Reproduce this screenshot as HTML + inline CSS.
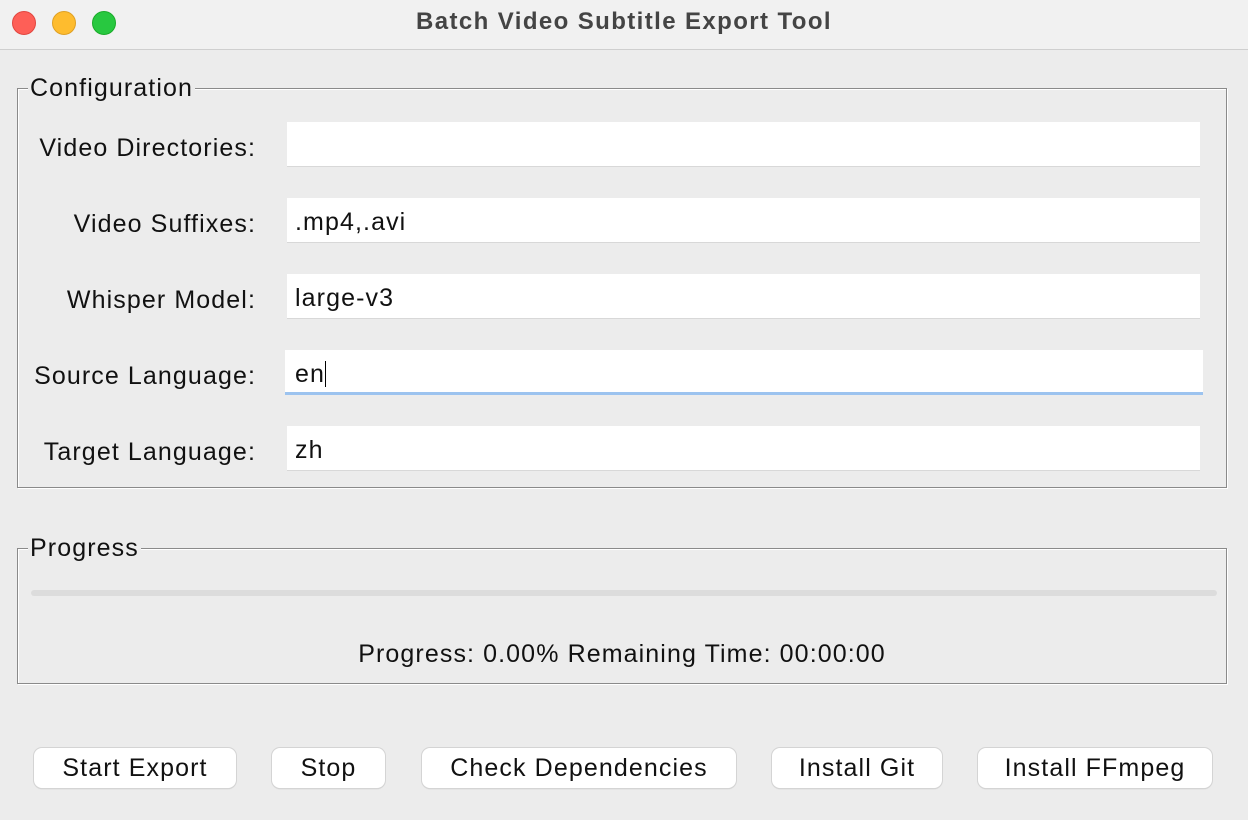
<!DOCTYPE html>
<html><head><style>
body{margin:0;width:1248px;height:820px;background:#ececec;font-family:"Liberation Sans",Arial,sans-serif;position:relative;overflow:hidden;color:#111}
.tb{position:absolute;left:0;top:0;width:1248px;height:50px;background:#f1f1f1;border-bottom:1px solid #cfcfcf;box-sizing:border-box}
.dot{position:absolute;top:11px;width:24px;height:24px;border-radius:50%}
.title{position:absolute;top:8px;left:0;width:1248px;text-align:center;font-weight:bold;font-size:24px;color:#444;letter-spacing:1.4px}
.frame{position:absolute;left:17px;width:1210px;box-sizing:border-box;border:1px solid #8a8a8a;box-shadow:inset 1px 1px 0 #fff,1px 1px 0 #fff}
.t{font-size:25px;letter-spacing:1.1px}
.lg{position:absolute;left:10px;top:-15px;background:#ececec;padding:0 2px;font-size:25px;letter-spacing:1.1px}
.lbl{position:absolute;right:992px;font-size:25px;letter-spacing:1.1px;text-align:right}
.ent{position:absolute;left:287px;width:913px;height:45px;background:#fff;box-sizing:border-box;border-bottom:1px solid #d8d8d8;font-size:25px;letter-spacing:1.1px;line-height:48px;padding-left:8px}
.btn{position:absolute;top:748px;height:40px;background:#fff;border-radius:8px;box-shadow:0 0 0 1px #d4d4d4,0 1px 1px #bbb;font-size:25px;letter-spacing:1.1px;text-align:center;line-height:40px}
</style></head><body>
<div class="tb">
<div class="dot" style="left:12px;background:#fe5f57;border:1px solid #e1463f;box-sizing:border-box"></div>
<div class="dot" style="left:52px;background:#febc2e;border:1px solid #dfa023;box-sizing:border-box"></div>
<div class="dot" style="left:92px;background:#28c840;border:1px solid #1aab29;box-sizing:border-box"></div>
<div class="title">Batch Video Subtitle Export Tool</div>
</div>
<div class="frame" style="top:88px;height:400px"><div class="lg">Configuration</div></div>
<div class="lbl" style="top:134px">Video Directories:</div>
<div class="lbl" style="top:210px">Video Suffixes:</div>
<div class="lbl" style="top:286px">Whisper Model:</div>
<div class="lbl" style="top:362px">Source Language:</div>
<div class="lbl" style="top:438px">Target Language:</div>
<div class="ent" style="top:122px"></div>
<div class="ent" style="top:198px">.mp4,.avi</div>
<div class="ent" style="top:274px">large-v3</div>
<div class="ent" style="top:350px;border-bottom:3px solid #9cc3ef;left:285px;width:918px;padding-left:10px">en<span style="display:inline-block;width:1px;height:26px;background:#000;vertical-align:-5px"></span></div>
<div class="ent" style="top:426px">zh</div>
<div class="frame" style="top:548px;height:136px"><div class="lg">Progress</div>
<div style="position:absolute;left:13px;top:41px;width:1186px;height:6px;background:#dcdcdc;border-radius:3px"></div>
<div class="t" style="position:absolute;left:0;width:100%;top:91px;text-align:center">Progress: 0.00% Remaining Time: 00:00:00</div>
</div>
<div class="btn" style="left:34px;width:202px">Start Export</div>
<div class="btn" style="left:272px;width:113px">Stop</div>
<div class="btn" style="left:422px;width:314px">Check Dependencies</div>
<div class="btn" style="left:772px;width:170px">Install Git</div>
<div class="btn" style="left:978px;width:234px">Install FFmpeg</div>
</body></html>
